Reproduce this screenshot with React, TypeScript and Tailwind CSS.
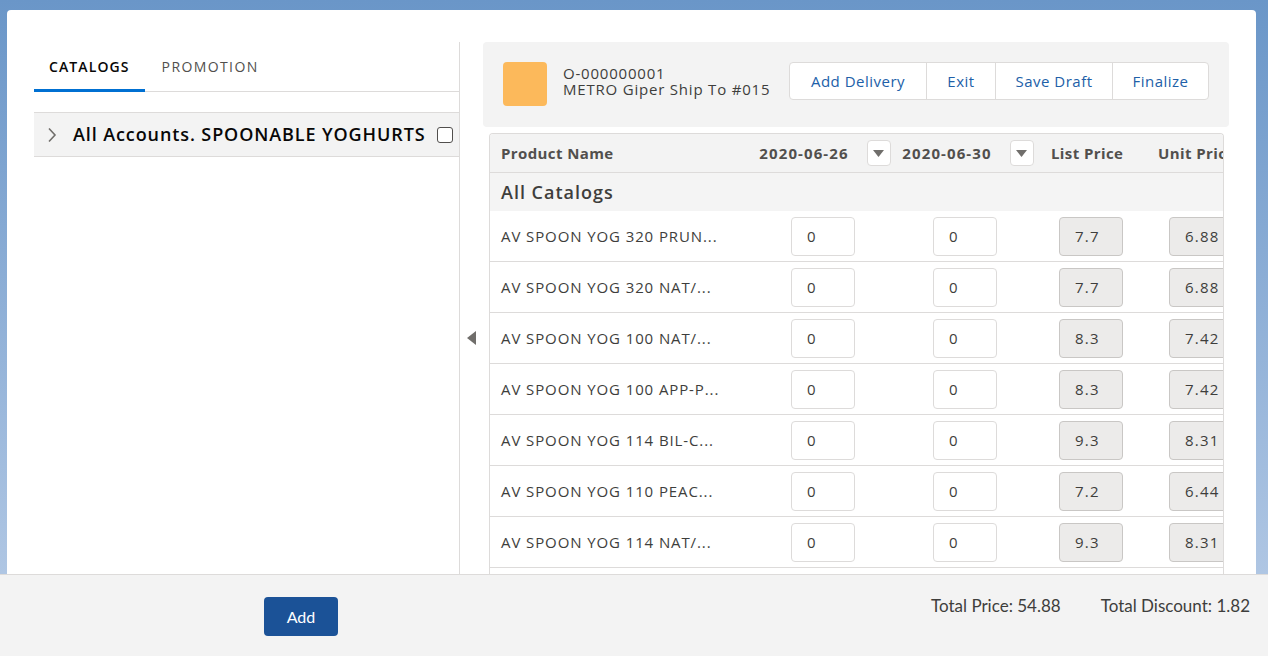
import React from "react";

const rows = [
  { name: "AV SPOON YOG 320 PRUN...", list: "7.7", unit: "6.88" },
  { name: "AV SPOON YOG 320 NAT/...", list: "7.7", unit: "6.88" },
  { name: "AV SPOON YOG 100 NAT/...", list: "8.3", unit: "7.42" },
  { name: "AV SPOON YOG 100 APP-P...", list: "8.3", unit: "7.42" },
  { name: "AV SPOON YOG 114 BIL-C...", list: "9.3", unit: "8.31" },
  { name: "AV SPOON YOG 110 PEAC...", list: "7.2", unit: "6.44" },
  { name: "AV SPOON YOG 114 NAT/...", list: "9.3", unit: "8.31" },
  { name: "AV SPOON YOG 114 STR/...", list: "9.3", unit: "8.31" },
];

function Caret() {
  return (
    <span className="flex h-[26px] w-[24px] shrink-0 items-center justify-center rounded-[4px] border border-[#dddbda] bg-white">
      <svg width="11" height="7" viewBox="0 0 11 7">
        <path d="M0 0 L11 0 L5.5 7 Z" fill="#706e6b" />
      </svg>
    </span>
  );
}

function Field({ value, ro }: { value: string; ro?: boolean }) {
  return (
    <div
      className={
        ro
          ? "flex h-[39px] w-[64px] shrink-0 items-center rounded-[4px] border border-[#c9c7c5] bg-[#ecebea] pl-[15px] text-[15px] tracking-[1.2px] text-[#3e3e3c]"
          : "flex h-[39px] w-[64px] shrink-0 items-center rounded-[4px] border border-[#dddbda] bg-white pl-[15px] text-[15px] tracking-[0.9px] text-[#3e3e3c]"
      }
    >
      {value}
    </div>
  );
}

export default function App() {
  return (
    <div
      className="relative flex h-[656px] w-[1268px] flex-col overflow-hidden bg-gradient-to-b from-[#6a96c8] to-[#b9cde7]"
      style={{ fontFamily: '"Open Sans", "Liberation Sans", sans-serif' }}
    >
      <div className="flex min-h-0 flex-1 pl-[7px] pr-[12px] pt-[10px]">
        <div className="flex min-h-0 min-w-0 flex-1 rounded-t-[4px] bg-white pt-[32px]">
          {/* Left pane */}
          <div className="flex w-[453px] shrink-0 flex-col border-r border-[#dddbda] pl-[27px]">
            <div className="flex h-[50px] border-b border-[#dddbda]">
              <div className="relative flex items-center px-[15px] text-[14px] font-semibold tracking-[1.1px] text-[#080707]">
                CATALOGS
                <span className="absolute bottom-[-1px] left-0 right-0 h-[3px] bg-[#0070d2]" />
              </div>
              <div className="flex items-center pl-[17px] pr-[15px] text-[14px] tracking-[1.4px] text-[#514f4d]">
                PROMOTION
              </div>
            </div>
            <div className="mt-[20px] flex h-[45px] items-center border-y border-[#dddbda] bg-[#f3f3f3] pl-[13px] pr-[6px]">
              <svg width="10" height="16" viewBox="0 0 10 16" className="mr-[16px] shrink-0">
                <path d="M2 1.5 L8 8 L2 14.5" fill="none" stroke="#706e6b" strokeWidth="1.6" />
              </svg>
              <span className="flex-1 whitespace-nowrap text-[18px] font-semibold tracking-[0.9px] text-[#080707]">
                All Accounts. SPOONABLE YOGHURTS
              </span>
              <span className="h-[16px] w-[16px] shrink-0 rounded-[3px] border border-[#514f4d] bg-white" />
            </div>
          </div>

          {/* Collapse */}
          <div className="flex w-[23px] shrink-0 justify-center pt-[289px]">
            <svg width="9" height="14" viewBox="0 0 9 14">
              <path d="M9 0 L9 14 L0 7 Z" fill="#706e6b" />
            </svg>
          </div>

          {/* Right pane */}
          <div className="flex min-w-0 flex-1 flex-col pr-[27px]">
            <div className="flex h-[85px] shrink-0 items-start rounded-[4px] bg-[#f3f3f3] p-[20px]">
              <div className="h-[44px] w-[44px] shrink-0 rounded-[4px] bg-[#fcb95b]" />
              <div className="ml-[16px] mt-[3px] flex-1 whitespace-nowrap text-[15px] leading-[16px] tracking-[0.8px] text-[#3e3e3c]">
                <div>O-000000001</div>
                <div>METRO Giper Ship To #015</div>
              </div>
              <div className="flex h-[38px] shrink-0 rounded-[4px] border border-[#dddbda] bg-white text-[15px] tracking-[0.5px] text-[#2160a8]">
                <div className="flex w-[136px] items-center justify-center">Add Delivery</div>
                <div className="flex w-[69px] items-center justify-center border-l border-[#dddbda]">Exit</div>
                <div className="flex w-[117px] items-center justify-center border-l border-[#dddbda]">Save Draft</div>
                <div className="flex w-[96px] items-center justify-center border-l border-[#dddbda]">Finalize</div>
              </div>
            </div>

            <div className="ml-[6px] mr-[5px] mt-[6px] min-h-0 flex-1 overflow-hidden rounded-t-[4px] border-x border-t border-[#dddbda]">
              <div className="w-[900px]">
                <div className="flex h-[39px] items-center border-b border-[#dddbda] bg-[#f3f3f3] text-[15px] font-bold tracking-[0.4px] text-[#514f4d]">
                  <div className="w-[261px] pl-[11px]">Product Name</div>
                  <div className="flex w-[148px] items-center justify-center gap-[18px]">
                    <span className="tracking-[1.1px]">2020-06-26</span>
                    <Caret />
                  </div>
                  <div className="flex w-[138px] items-center justify-center gap-[18px]">
                    <span className="tracking-[1.1px]">2020-06-30</span>
                    <Caret />
                  </div>
                  <div className="w-[110px] pl-[14px]">List Price</div>
                  <div className="w-[108px] pl-[11px]">Unit Price</div>
                </div>
                <div className="flex h-[38px] items-center bg-[#f4f4f4] pl-[11px] text-[18px] font-semibold tracking-[1px] text-[#3e3e3c]">
                  All Catalogs
                </div>
                {rows.map((r, i) => (
                  <div key={i} className="flex h-[51px] items-center border-b border-[#dddbda] text-[15px] text-[#3e3e3c]">
                    <div className="w-[261px] whitespace-nowrap pl-[11px] tracking-[0.9px]">{r.name}</div>
                    <div className="flex w-[144px] justify-center">
                      <Field value="0" />
                    </div>
                    <div className="flex w-[140px] justify-center">
                      <Field value="0" />
                    </div>
                    <div className="flex w-[112px] justify-center">
                      <Field value={r.list} ro />
                    </div>
                    <div className="flex w-[108px] justify-center">
                      <Field value={r.unit} ro />
                    </div>
                  </div>
                ))}
              </div>
            </div>
          </div>
        </div>
      </div>

      {/* Footer */}
      <div
        className="flex h-[82px] shrink-0 border-t border-[#dddbda] bg-[#f3f3f3]"
        style={{ fontFamily: 'Lato, "Liberation Sans", sans-serif' }}
      >
        <div className="flex w-[602px] justify-center pt-[22px]">
          <button className="h-[39px] w-[74px] rounded-[4px] bg-[#1b5297] text-[16px] text-white">Add</button>
        </div>
        <div className="flex flex-1 justify-end gap-[40px] pr-[18px] pt-[21px] text-[17px] leading-[20px] text-[#3e3e3c]">
          <span>Total Price: 54.88</span>
          <span>Total Discount: 1.82</span>
        </div>
      </div>
    </div>
  );
}
